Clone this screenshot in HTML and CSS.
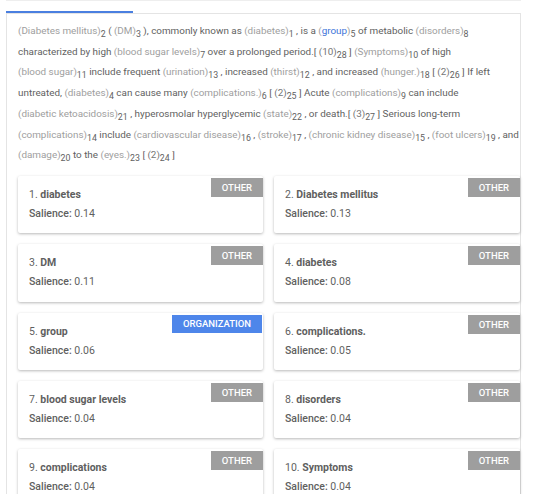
FILE: index.html
```html
<!DOCTYPE html>
<html>
<head>
<meta charset="utf-8">
<link rel="stylesheet" href="styles.css">
</head>
<body>
<div class="page">
  <div class="tabs">
    <div class="tab active"></div>
  </div>
  <div class="panel">
    <p class="doc">
      <span class="ent">(Diabetes mellitus)<sub>2</sub></span> ( <span class="ent">(DM)<sub>3</sub></span> ), commonly known as <span class="ent">(diabetes)<sub>1</sub></span> , is a <span class="ent">(<span class="org">group</span>)<sub>5</sub></span> of metabolic <span class="ent">(disorders)<sub>8</sub></span><br>
      characterized by high <span class="ent">(blood sugar levels)<sub>7</sub></span> over a prolonged period.[ <span class="ent cite">(10)<sub>28</sub></span> ] <span class="ent">(Symptoms)<sub>10</sub></span> of high<br>
      <span class="ent">(blood sugar)<sub>11</sub></span> include frequent <span class="ent">(urination)<sub>13</sub></span> , increased <span class="ent">(thirst)<sub>12</sub></span> , and increased <span class="ent">(hunger.)<sub>18</sub></span> [ <span class="ent cite">(2)<sub>26</sub></span> ] If left<br>
      untreated, <span class="ent">(diabetes)<sub>4</sub></span> can cause many <span class="ent">(complications.)<sub>6</sub></span> [ <span class="ent cite">(2)<sub>25</sub></span> ] Acute <span class="ent">(complications)<sub>9</sub></span> can include<br>
      <span class="ent">(diabetic ketoacidosis)<sub>21</sub></span> , hyperosmolar hyperglycemic <span class="ent">(state)<sub>22</sub></span> , or death.[ <span class="ent cite">(3)<sub>27</sub></span> ] Serious long-term<br>
      <span class="ent">(complications)<sub>14</sub></span> include <span class="ent">(cardiovascular disease)<sub>16</sub></span> , <span class="ent">(stroke)<sub>17</sub></span> , <span class="ent">(chronic kidney disease)<sub>15</sub></span> , <span class="ent">(foot ulcers)<sub>19</sub></span> , and<br>
      <span class="ent">(damage)<sub>20</sub></span> to the <span class="ent">(eyes.)<sub>23</sub></span> [ <span class="ent cite">(2)<sub>24</sub></span> ]
    </p>
    <div class="cards">
      <div class="card"><div class="name">1. <b>diabetes</b></div><div class="sal"><span class="lbl">Salience:</span> 0.14</div><span class="badge">OTHER</span></div>
      <div class="card"><div class="name">2. <b>Diabetes mellitus</b></div><div class="sal"><span class="lbl">Salience:</span> 0.13</div><span class="badge">OTHER</span></div>
      <div class="card"><div class="name">3. <b>DM</b></div><div class="sal"><span class="lbl">Salience:</span> 0.11</div><span class="badge">OTHER</span></div>
      <div class="card"><div class="name">4. <b>diabetes</b></div><div class="sal"><span class="lbl">Salience:</span> 0.08</div><span class="badge">OTHER</span></div>
      <div class="card"><div class="name">5. <b>group</b></div><div class="sal"><span class="lbl">Salience:</span> 0.06</div><span class="badge blue">ORGANIZATION</span></div>
      <div class="card"><div class="name">6. <b>complications.</b></div><div class="sal"><span class="lbl">Salience:</span> 0.05</div><span class="badge">OTHER</span></div>
      <div class="card"><div class="name">7. <b>blood sugar levels</b></div><div class="sal"><span class="lbl">Salience:</span> 0.04</div><span class="badge">OTHER</span></div>
      <div class="card"><div class="name">8. <b>disorders</b></div><div class="sal"><span class="lbl">Salience:</span> 0.04</div><span class="badge">OTHER</span></div>
      <div class="card"><div class="name">9. <b>complications</b></div><div class="sal"><span class="lbl">Salience:</span> 0.04</div><span class="badge">OTHER</span></div>
      <div class="card"><div class="name">10. <b>Symptoms</b></div><div class="sal"><span class="lbl">Salience:</span> 0.04</div><span class="badge">OTHER</span></div>
    </div>
  </div>
</div>
</body>
</html>
```

FILE: styles.css
```css
html, body {
  margin: 0;
  padding: 0;
  overflow: hidden;
  background: #ffffff;
}
body {
  font-family: Roboto, "Liberation Sans", sans-serif;
  color: #616161;
}
.page {
  padding-left: 6px;
  width: 515px;
}
.tabs {
  display: flex;
  align-items: flex-start;
  height: 13px;
  border-top: 1px solid #eeeeee;
  box-sizing: border-box;
}
.tab.active {
  width: 127px;
  height: 2px;
  background: #4a7fe0;
  margin-top: 10px;
}
.panel {
  border: 1px solid #e4e4e4;
  border-bottom: none;
  padding: 0 0 40px 11px;
  min-height: 600px;
}
.doc {
  margin: 0;
  padding-top: 7px;
  font-size: 9.9px;
  line-height: 20.7px;
  color: #616161;
  white-space: nowrap;
}
.ent {
  color: #9e9e9e;
}
.ent sub {
  font-size: 8.8px;
  line-height: 0;
  vertical-align: -3px;
  color: #616161;
}
.ent.cite {
  color: #757575;
}
.org {
  color: #3d74d9;
}
.cards {
  margin-top: 10px;
  display: grid;
  grid-template-columns: 245px 246px;
  column-gap: 11px;
  row-gap: 11px;
}
.card {
  position: relative;
  background: #ffffff;
  height: 57.3px;
  box-sizing: border-box;
  padding: 9px 11px 9px;
  box-shadow: 0 1px 3px rgba(0, 0, 0, 0.28);
  border-radius: 2px;
  font-size: 10.5px;
  line-height: 19px;
  color: #5f5f5f;
}
.name b {
  font-weight: 700;
}
.lbl {
  font-weight: 500;
}
.badge {
  position: absolute;
  top: 2px;
  right: 0;
  height: 19px;
  line-height: 19px;
  padding: 0 11px;
  background: #9e9e9e;
  color: #ffffff;
  font-size: 9.5px;
  font-weight: 500;
}
.badge.blue {
  background: #4e86ea;
  right: 1px;
  height: 18px;
  line-height: 18px;
  padding: 0 11px;
}
```
